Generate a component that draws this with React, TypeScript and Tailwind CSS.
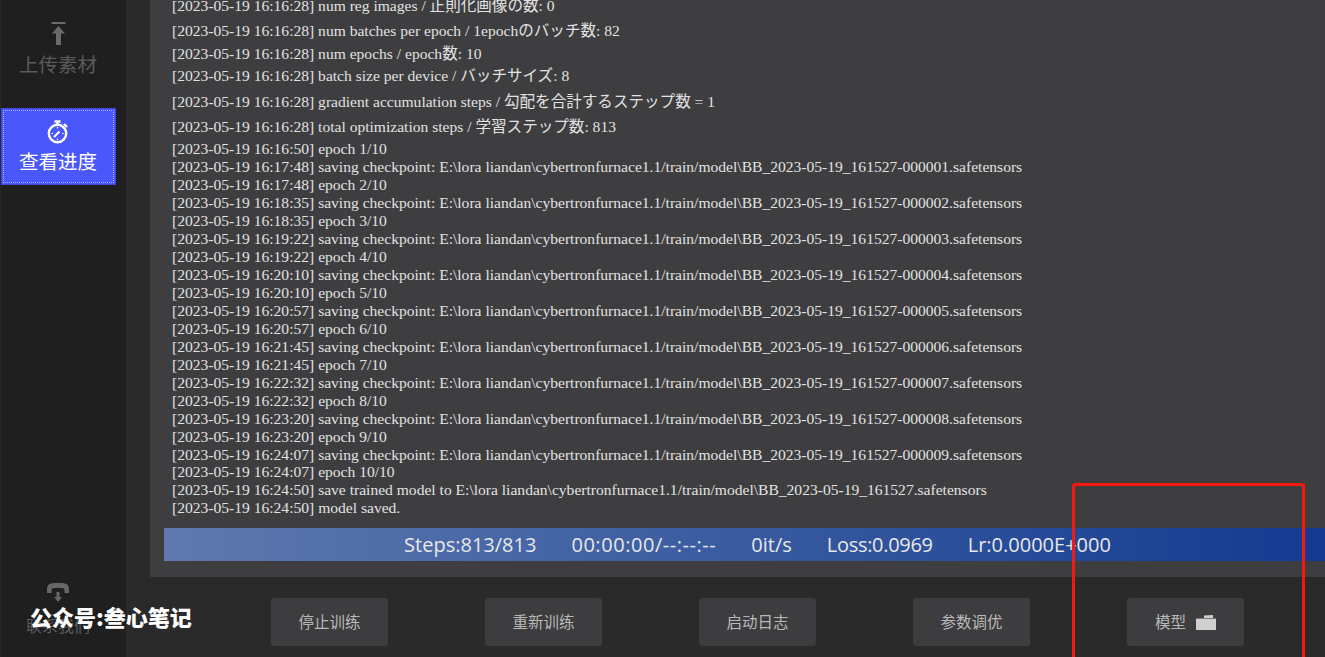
const head: [string, string][] = [
  ["h-[20px]", "num reg images / 正則化画像の数: 0"],
  ["h-[30px]", "num batches per epoch / 1epochのバッチ数: 82"],
  ["h-[16px]", "num epochs / epoch数: 10"],
  ["h-[28px]", "batch size per device / バッチサイズ: 8"],
  ["h-[24px]", "gradient accumulation steps / 勾配を合計するステップ数 = 1"],
  ["h-[26px]", "total optimization steps / 学習ステップ数: 813"],
];
const base = "E:\\lora liandan\\cybertronfurnace1.1/train/model\\BB_2023-05-19_161527";
const tail: [string, string][] = [
  ["16:16:50", "epoch 1/10"],
  ["16:17:48", `saving checkpoint: ${base}-000001.safetensors`],
  ["16:17:48", "epoch 2/10"],
  ["16:18:35", `saving checkpoint: ${base}-000002.safetensors`],
  ["16:18:35", "epoch 3/10"],
  ["16:19:22", `saving checkpoint: ${base}-000003.safetensors`],
  ["16:19:22", "epoch 4/10"],
  ["16:20:10", `saving checkpoint: ${base}-000004.safetensors`],
  ["16:20:10", "epoch 5/10"],
  ["16:20:57", `saving checkpoint: ${base}-000005.safetensors`],
  ["16:20:57", "epoch 6/10"],
  ["16:21:45", `saving checkpoint: ${base}-000006.safetensors`],
  ["16:21:45", "epoch 7/10"],
  ["16:22:32", `saving checkpoint: ${base}-000007.safetensors`],
  ["16:22:32", "epoch 8/10"],
  ["16:23:20", `saving checkpoint: ${base}-000008.safetensors`],
  ["16:23:20", "epoch 9/10"],
  ["16:24:07", `saving checkpoint: ${base}-000009.safetensors`],
  ["16:24:07", "epoch 10/10"],
  ["16:24:50", `save trained model to ${base}.safetensors`],
  ["16:24:50", "model saved."],
];

function Btn({ label, icon }: { label: string; icon?: boolean }) {
  return (
    <div className="flex h-[48px] w-[117px] items-center justify-center gap-[10px] rounded-[3px] bg-[#3d3d3f] text-[15.5px] text-[#b9b9b9]">
      <span>{label}</span>
      {icon && (
        <svg width="20" height="15" viewBox="0 0 20 15">
          <path d="M8 0.6L17 0V3H8Z" fill="#cfcfcf" />
          <rect x="0" y="3.6" width="20" height="11.4" fill="#cfcfcf" />
        </svg>
      )}
    </div>
  );
}

export default function App() {
  return (
    <div
      className="relative flex h-[657px] w-[1325px] overflow-hidden bg-[#2a2a2b]"
      style={{ fontFamily: '"Noto Sans CJK SC", "Noto Sans", sans-serif' }}
    >
      <aside className="flex h-full w-[126px] shrink-0 flex-col justify-between border-l border-[#29292a] bg-[#1f1f20]">
        <div className="flex flex-col">
          <div className="flex h-[108px] flex-col items-center pt-[22px] pr-[11px] text-[#5b5b5b]">
            <svg width="15" height="23" viewBox="0 0 15 23" fill="#6a6a6a">
              <rect x="0.5" y="0" width="14" height="2" />
              <path d="M7.5 4L14 11.5H10V23H5V11.5H1Z" />
            </svg>
            <span className="mt-[5px] text-[19.5px] leading-[28px]">上传素材</span>
          </div>
          <div className="flex h-[77px] w-[115px] flex-col items-center border border-[#3f48d8] bg-[#4a57fb] pt-[11px] pr-[1px] text-white outline-1 -outline-offset-3 outline-dotted outline-[#aab0ff]">
            <svg width="22" height="24" viewBox="0 0 22 24" fill="none" stroke="#fff" strokeWidth="2.4">
              <circle cx="10.5" cy="13.5" r="8.7" />
              <path d="M7.5 1.5H13.5M10.5 1.5V4.5" />
              <path d="M17 4L20 7" />
              <path d="M7 17L12.5 11.5" strokeWidth="2" />
              <path d="M10.5 7V8.5M4.5 13.5H6M15 13.5H16.5M10.5 18.5V20" strokeWidth="1.2" />
            </svg>
            <span className="mt-[3px] text-[19.5px] leading-[28px]">查看进度</span>
          </div>
        </div>
        <div className="flex flex-col items-center pb-[20px] pr-[11px] text-[#5b5b5b]">
          <svg width="22" height="20" viewBox="0 0 22 20" fill="#666">
            <path d="M0 10V6Q0 0 7 0H15Q22 0 22 6V10H17.5V7Q17.5 5 15 5H7Q4.5 5 4.5 7V10Z" />
            <path d="M9.5 9H12.5V14H15L11 19L7 14H9.5Z" />
          </svg>
          <span className="mt-[10px] text-[16px] leading-[24px]">联系我们</span>
        </div>
      </aside>

      <main className="flex min-w-0 flex-1 flex-col pl-[24px]">
        <section className="flex h-[577px] flex-col justify-end overflow-hidden bg-[#3e3e40] pb-[16px] pl-[14px]">
          <div
            className="flex flex-col justify-end pb-[11px] pl-[8px] text-[15.57px] whitespace-nowrap text-[#e2e2e2]"
            style={{ fontFamily: '"Liberation Serif", "Noto Sans CJK JP", serif' }}
          >
            {head.map(([h, t]) => (
              <div key={t} className={`flex shrink-0 items-center ${h}`}>
                [2023-05-19 16:16:28] {t}
              </div>
            ))}
            {tail.map(([time, t], i) => (
              <div key={i} className={i === 18 ? "-mt-[1px] flex h-[18px] shrink-0 items-center" : "flex h-[18px] shrink-0 items-center"}>
                [2023-05-19 {time}] {t}
              </div>
            ))}
          </div>
          <div
            className="flex h-[33px] shrink-0 items-center justify-center gap-[35px] bg-gradient-to-r from-[#5f79ae] to-[#123a90] pl-[26px] text-[20px] text-[#e8e8e8]"
            style={{ fontFamily: '"Open Sans", sans-serif' }}
          >
            <span>Steps:813/813</span>
            <span className="tracking-[0.55px]">00:00:00/--:--:--</span>
            <span>0it/s</span>
            <span className="tracking-[-0.3px]">Loss:0.0969</span>
            <span>Lr:0.0000E+000</span>
          </div>
        </section>
        <footer className="flex flex-1 items-start gap-[97px] pt-[21px] pl-[121px]">
          <Btn label="停止训练" />
          <Btn label="重新训练" />
          <Btn label="启动日志" />
          <Btn label="参数调优" />
          <Btn label="模型" icon />
        </footer>
      </main>

      <div className="absolute top-[483px] left-[1072px] h-[190px] w-[233px] rounded-[3px] border-[3px] border-[#f5180f]" />
      <div className="absolute top-[601px] left-[30px] text-[22px] leading-[30px] font-black text-white">
        公众号:叁心笔记
      </div>
    </div>
  );
}
